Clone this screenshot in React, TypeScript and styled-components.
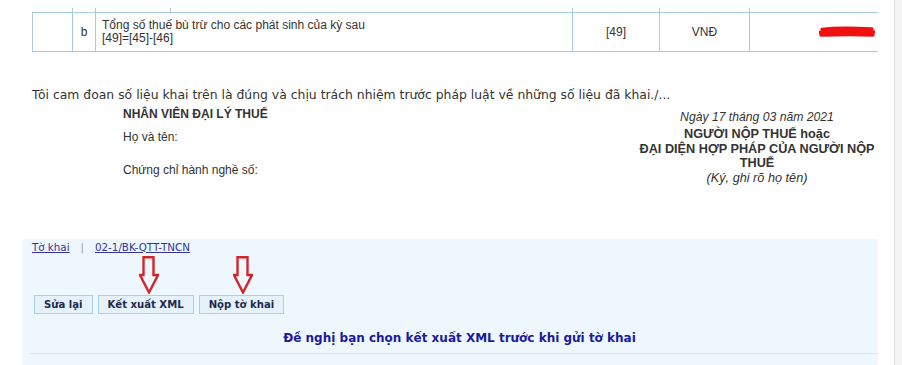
import React from "react";
import styled, { createGlobalStyle } from "styled-components";

const Global = createGlobalStyle`
  html, body { margin: 0; padding: 0; background: #fff; }
  body { font-family: "Liberation Sans", Arial, sans-serif; color: #333; }
`;

const Page = styled.div`
  display: flex;
  width: 902px;
  height: 365px;
  overflow: hidden;
`;

const Main = styled.div`
  width: 894px;
  padding: 8px 16px 0 0;
  box-sizing: border-box;
  display: flex;
  flex-direction: column;
`;

const ScrollTrack = styled.div`
  width: 8px;
  background: #f3f3f3;
  border-left: 1px solid #e4e4e4;
`;

const BORDER = "#a9cbe0";

const Grid = styled.div<{ $cols: string }>`
  margin-left: 32px;
  display: grid;
  grid-template-columns: ${(p) => p.$cols};
`;

const StubRow = styled(Grid)`
  height: 4px;
`;

const StubCell = styled.div<{ $line?: boolean }>`
  border-left: ${(p) => (p.$line ? `1px solid ${BORDER}` : "none")};
`;

const Row = styled(Grid)`
  border-top: 1px solid ${BORDER};
  border-bottom: 1px solid ${BORDER};
  border-left: 1px solid ${BORDER};
  height: 40px;
  box-sizing: border-box;
`;

const Cell = styled.div<{ $align?: string; $first?: boolean }>`
  border-left: ${(p) => (p.$first ? "none" : `1px solid ${BORDER}`)};
  display: flex;
  align-items: center;
  justify-content: ${(p) => p.$align || "flex-start"};
  font-size: 12px;
  color: #333;
  line-height: 13px;
`;

const Desc = styled(Cell)`
  padding-left: 6px;
  flex-direction: column;
  align-items: flex-start;
  justify-content: center;
`;

const ValueCell = styled(Cell)`
  padding-right: 3px;
`;

const Declaration = styled.div`
  margin-top: 35px;
  margin-left: 32px;
  font-family: "DejaVu Sans", Verdana, sans-serif;
  font-size: 12.4px;
  line-height: 16px;
  color: #333;
  white-space: nowrap;
`;

const Signatures = styled.div`
  display: flex;
  padding-left: 123px;
  height: 136px;
`;

const LeftSig = styled.div`
  flex: 1;
  font-size: 12px;
  color: #333;
`;

const SigTitle = styled.div`
  font-weight: bold;
  line-height: 14px;
  margin-top: 4px;
`;

const SigLine = styled.div<{ $gap: number }>`
  margin-top: ${(p) => p.$gap}px;
  line-height: 14px;
`;

const RightSig = styled.div`
  width: 260px;
  margin-right: -9px;
  text-align: center;
  font-size: 12.7px;
  color: #333;
`;

const DateLine = styled.div`
  font-style: italic;
  font-size: 12.2px;
  line-height: 14px;
  margin-top: 7px;
  margin-bottom: 3px;
`;

const SigBold = styled.div`
  font-weight: bold;
  line-height: 14.5px;
`;

const SigNote = styled.div`
  font-style: italic;
  line-height: 14.5px;
`;

const Panel = styled.div`
  position: relative;
  margin-left: 23px;
  flex: 1;
  background: #eff7fe;
  padding: 0 0 0 9px;
  font-family: "DejaVu Sans", Verdana, sans-serif;
`;

const Links = styled.div`
  display: flex;
  align-items: center;
  gap: 8px;
  font-size: 10.3px;
  height: 15px;
`;

const Link = styled.a`
  color: #33339c;
  text-decoration: underline;
  cursor: pointer;
`;

const Sep = styled.span`
  color: #999;
  margin: 0 3px;
`;

const Toolbar = styled.div`
  display: flex;
  gap: 5px;
  margin-top: 41px;
  padding-left: 2px;
`;

const Button = styled.button`
  height: 19px;
  padding: 0 9px;
  background: #e5f1fb;
  border: 1px solid #a8d0e6;
  font-family: "DejaVu Sans", Verdana, sans-serif;
  font-weight: bold;
  font-size: 10.1px;
  color: #1e2a4e;
  line-height: 17px;
  cursor: pointer;
`;

const Message = styled.div`
  margin-top: 17px;
  text-align: center;
  font-weight: bold;
  font-size: 12px;
  color: #1a1a9e;
  line-height: 15px;
  padding-left: 9px;
`;

const Divider = styled.div`
  margin-top: 7px;
  margin-left: -2px;
  border-top: 1px solid #dbe7f1;
`;

const Arrow = styled.svg<{ $left: number }>`
  position: absolute;
  top: 17px;
  left: ${(p) => p.$left}px;
`;

const DownArrow = ({ left }: { left: number }) => (
  <Arrow $left={left} width="20" height="38" viewBox="0 0 20 38">
    <path
      d="M4.5 1.2 H14.5 V19 H19 L10 36.5 L1 19 H4.5 Z"
      fill="none"
      stroke="#d3242a"
      strokeWidth="2.4"
      strokeLinejoin="miter"
    />
  </Arrow>
);

const Redaction = () => (
  <svg width="56" height="12" viewBox="0 0 56 12">
    <path
      d="M3 3.5 C14 2 32 2 53 3 M1 6.5 C16 5 36 5 55 6 M2 9 C16 8.5 36 8 54 9"
      fill="none"
      stroke="#f01010"
      strokeWidth="3.4"
      strokeLinecap="round"
    />
  </svg>
);

export default function App() {
  return (
    <>
      <Global />
      <Page>
        <Main>
          <StubRow $cols="40px 23px 75px 402px 87px 90px 129px">
            <StubCell />
            <StubCell $line />
            <StubCell $line />
            <StubCell $line />
            <StubCell $line />
            <StubCell $line />
            <StubCell $line />
          </StubRow>
          <Row $cols="39px 23px 477px 87px 90px 129px">
            <Cell $first />
            <Cell $align="center">b</Cell>
            <Desc>
              <span>Tổng số thuế bù trừ cho các phát sinh của kỳ sau</span>
              <span>[49]=[45]-[46]</span>
            </Desc>
            <Cell $align="center">[49]</Cell>
            <Cell $align="center">VNĐ</Cell>
            <ValueCell $align="flex-end">
              <Redaction />
            </ValueCell>
          </Row>
          <Declaration>
            Tôi cam đoan số liệu khai trên là đúng và chịu trách nhiệm trước pháp luật về những số liệu đã khai./...
          </Declaration>
          <Signatures>
            <LeftSig>
              <SigTitle>NHÂN VIÊN ĐẠI LÝ THUẾ</SigTitle>
              <SigLine $gap={9}>Họ và tên:</SigLine>
              <SigLine $gap={19}>Chứng chỉ hành nghề số:</SigLine>
            </LeftSig>
            <RightSig>
              <DateLine>Ngày 17 tháng 03 năm 2021</DateLine>
              <SigBold>NGƯỜI NỘP THUẾ hoặc</SigBold>
              <SigBold>ĐẠI DIỆN HỢP PHÁP CỦA NGƯỜI NỘP</SigBold>
              <SigBold>THUẾ</SigBold>
              <SigNote>(Ký, ghi rõ họ tên)</SigNote>
            </RightSig>
          </Signatures>
          <Panel>
            <Links>
              <Link>Tờ khai</Link>
              <Sep>|</Sep>
              <Link>02-1/BK-QTT-TNCN</Link>
            </Links>
            <Toolbar>
              <Button>Sửa lại</Button>
              <Button>Kết xuất XML</Button>
              <Button>Nộp tờ khai</Button>
            </Toolbar>
            <Message>Đề nghị bạn chọn kết xuất XML trước khi gửi tờ khai</Message>
            <Divider />
            <DownArrow left={116} />
            <DownArrow left={210} />
          </Panel>
        </Main>
        <ScrollTrack />
      </Page>
    </>
  );
}
